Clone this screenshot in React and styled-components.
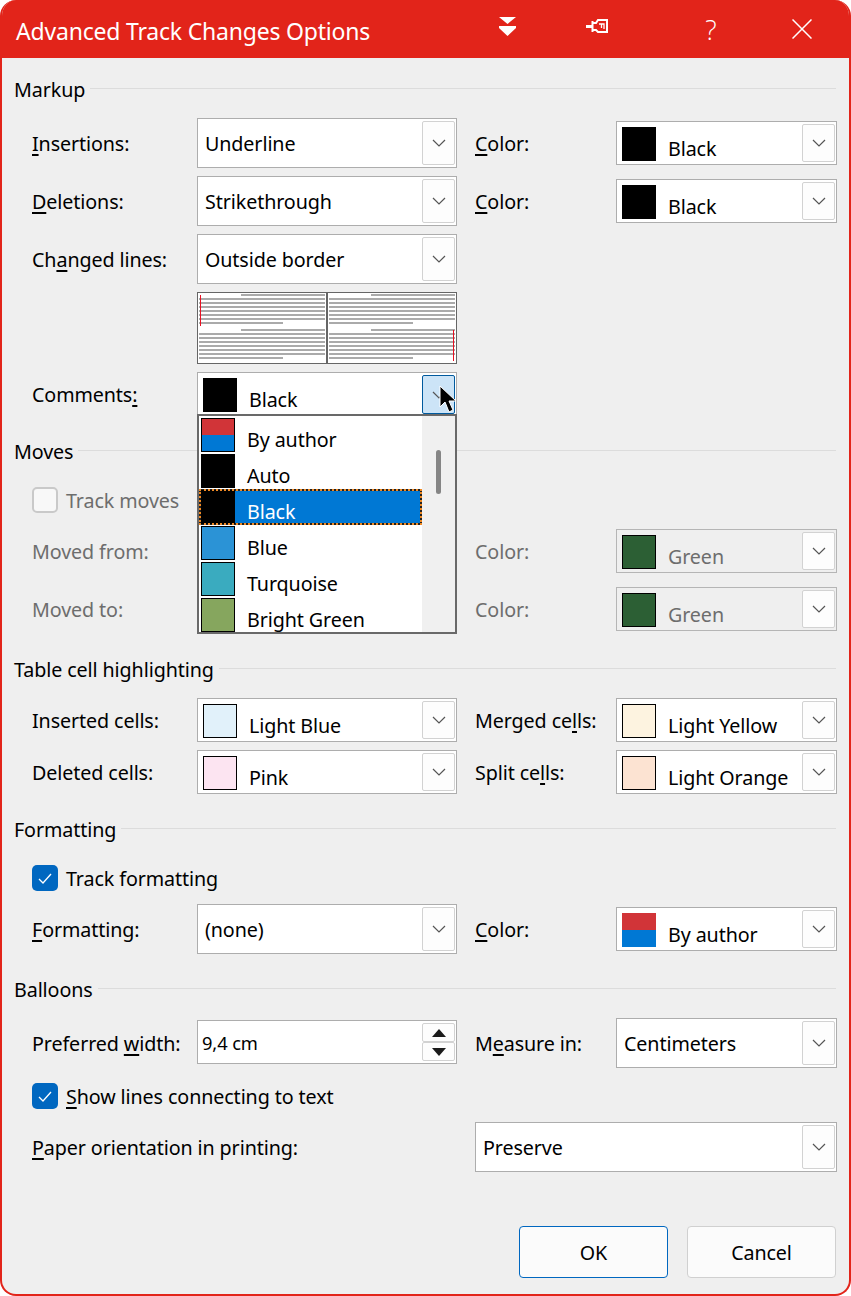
import React from "react";
import styled, { createGlobalStyle } from "styled-components";

const Global = createGlobalStyle`
  html, body { margin: 0; padding: 0; background: #fff; }
  body { width: 851px; height: 1296px; overflow: hidden; font-family: "Noto Sans", "Open Sans", sans-serif; }
  * { box-sizing: border-box; }
`;

const Dialog = styled.div`
  width: 851px; height: 1296px; background: #efefef;
  border: 2px solid #e2241a; border-top: 0; border-radius: 16px;
  overflow: hidden; display: flex; flex-direction: column; position: relative;
  color: #000; font-size: 19.7px; letter-spacing: -0.1px;
`;
const TitleBar = styled.div`
  height: 58px; flex: none; margin: 0 -2px; background: #e2241a; color: #fff;
  display: flex; align-items: center; padding-left: 16px; position: relative;
`;
const Title = styled.div`font-size: 23px; letter-spacing: -0.2px; flex: 1; margin-top: 4px;`;
const TitleIcons = styled.div`
  display: grid; grid-template-columns: 84px 96px 132px 50px; align-items: center;
  justify-items: center; margin-right: 24px; height: 58px;
`;
const IconSlot = styled.div`
  display: flex; align-items: center; justify-content: center; margin-top: ${p => p.$dy || 0}px;
`;
const HelpGlyph = styled.span`font-size: 27px; line-height: 1; font-weight: 300; font-family: "Open Sans", "Noto Sans", sans-serif;`;
const Body = styled.div`flex: 1; padding: 0 13px 0 12px; position: relative;`;
const Group = styled.section`margin-top: ${p => p.$top}px;`;
const GroupHead = styled.div`
  display: flex; align-items: center; height: 30px;
  &::after { content: ""; flex: 1; height: 1px; background: #dcdcdc; margin-left: 5px; margin-top: -2px; }
`;
const Row = styled.div`
  display: grid; grid-template-columns: 165px 260px 18px 141px 221px;
  height: ${p => p.$h || 50}px; margin-top: ${p => p.$top || 0}px; margin-left: 18px;
  align-items: center;
`;
const Label = styled.div`
  white-space: nowrap; grid-column: ${p => p.$col || "auto"};
  color: ${p => (p.$off ? "#6d6d6d" : "#000")};
  u { text-underline-offset: 3px; text-decoration-thickness: 2px; }
`;
const Box = styled.div`
  height: ${p => p.$h}px; background: ${p => (p.$off ? "#efefef" : "#fff")};
  border: 1px solid ${p => (p.$off ? "#b5b5b5" : "#adadad")};
  display: flex; align-items: center; position: relative; grid-column: ${p => p.$col || "auto"};
  padding-left: ${p => p.$pad || 7}px; margin-top: ${p => p.$dy || 0}px;
`;
const BoxText = styled.span`
  flex: 1; white-space: nowrap; padding-top: 1px; color: ${p => (p.$off ? "#6d6d6d" : "#000")};
  font-size: ${p => (p.$small ? "18.3px" : "inherit")};
`;
const ArrowBtn = styled.div`
  position: absolute; right: 1px; top: 1px; bottom: 1px; width: 33px;
  background: ${p => (p.$open ? "#cce4f7" : "#fdfdfd")};
  border: 1px solid ${p => (p.$open ? "#005a9e" : "#d2d2d2")}; border-radius: 2px;
  display: flex; align-items: center; justify-content: center;
  margin: ${p => (p.$open ? "1px 0 0" : "1px 0 1px")};
`;
const Swatch = styled.span`
  width: 34px; height: 34px; flex: none; display: block; margin-top: 2px;
  border: ${p => (p.$plain ? "0" : "1.5px solid #000")};
  background: ${p => p.$c};
`;
const ColorName = styled.span`
  margin-left: 12px; margin-top: 10px; white-space: nowrap; color: ${p => (p.$off ? "#6d6d6d" : "#000")};
`;
const Preview = styled.svg`display: block; grid-column: 2; width: 260px; height: 72px;`;
const CheckRow = styled.div`
  display: flex; align-items: center; height: 26px; margin-left: 18px; margin-top: ${p => p.$top}px;
  color: ${p => (p.$off ? "#6d6d6d" : "#000")};
  u { text-underline-offset: 3px; text-decoration-thickness: 2px; }
`;
const Check = styled.span`
  width: 26px; height: 26px; border-radius: 5px; margin-right: 8px; flex: none;
  background: ${p => (p.$on ? "#0067c0" : "#f8f8f8")};
  border: ${p => (p.$on ? "0" : "2px solid #c9c9c9")};
  display: flex; align-items: center; justify-content: center;
`;
const Spin = styled.div`
  position: absolute; right: 1px; top: 1px; bottom: 1px; width: 33px;
  display: grid; grid-template-rows: 1fr 1fr; gap: 0; padding: 1px 0;
`;
const SpinBtn = styled.div`
  background: #fdfdfd; border: 1px solid #d2d2d2; border-radius: 2px;
  display: flex; align-items: center; justify-content: center;
`;
const Dropdown = styled.div`
  position: absolute; left: 195px; top: 356px; width: 260px; height: 220px; z-index: 2;
  background: #fff; border: 2px solid #696969; display: flex; overflow: hidden;
`;
const List = styled.div`flex: 1; display: flex; flex-direction: column; padding-top: 1px;`;
const Item = styled.div`
  height: 36px; flex: none; display: flex; align-items: center; position: relative; padding-left: 2px;
  color: ${p => (p.$sel ? "#fff" : "#000")};
  background: ${p => (p.$sel ? "linear-gradient(to right, #fff 36px, #0078d4 36px)" : "transparent")};
  ${p => p.$sel && "outline: 2px dotted #f08a24; outline-offset: -2px; box-shadow: inset 0 0 0 2px #222;"}
`;
const ItemSwatch = styled(Swatch)`margin-top: 0;`;
const ItemName = styled.span`margin-left: 12px; margin-top: 8px; white-space: nowrap;`;
const Track = styled.div`width: 33px; flex: none; background: #f0f0f0; position: relative;`;
const Thumb = styled.div`
  position: absolute; left: 14px; top: 34px; width: 5px; height: 44px; border-radius: 3px; background: #858585;
`;
const Cursor = styled.svg`position: absolute; left: 436px; top: 327px; z-index: 3;`;
const Footer = styled.div`
  display: flex; justify-content: flex-end; gap: 19px; margin-top: 54px;
`;
const Btn = styled.div`
  width: 149px; height: 52px; border-radius: 4px; background: #fbfbfb;
  border: 1px solid ${p => (p.$primary ? "#0067c0" : "#d0d0d0")};
  display: flex; align-items: center; justify-content: center;
`;
const PaperRow = styled.div`
  display: grid; grid-template-columns: 443px 362px; margin: 13px 0 0 18px; align-items: center; height: 50px;
`;

const Chevron = ({ c = "#555" }) => (
  <svg width="14" height="8" viewBox="0 0 14 8" fill="none"><path d="M1 1l6 6 6-6" stroke={c} strokeWidth="1.2" /></svg>
);
const Arrow = ({ open }) => <ArrowBtn $open={open}><Chevron /></ArrowBtn>;

const CheckMark = () => (
  <svg width="14" height="11" viewBox="0 0 14 11" fill="none"><path d="M1 6l4 4 8-9" stroke="#fff" strokeWidth="1.3" /></svg>
);

const Select = ({ value, col, h = 50, pad }) => (
  <Box $h={h} $col={col} $pad={pad}><BoxText>{value}</BoxText><Arrow /></Box>
);
const Combo = ({ color, name, col, off, plain, open }) => (
  <Box $h={44} $col={col} $pad={5} $off={off}>
    <Swatch $c={color} $plain={plain} />
    <ColorName $off={off}>{name}</ColorName>
    <Arrow open={open} />
  </Box>
);

const lineSet = (x0, y0) => {
  const out = [];
  for (let i = 0; i < 8; i++) {
    const first = i === 0;
    const last = i === 7;
    out.push(
      <rect
        key={`${x0}-${y0}-${i}`}
        x={x0 + (first ? 42 : 0)}
        y={y0 + i * 4}
        width={first || last ? 84 : 126}
        height="2"
        fill="#aaa"
      />
    );
  }
  return out;
};

const PreviewArt = () => (
  <Preview viewBox="0 0 260 72">
    <rect x="0.5" y="0.5" width="259" height="71" fill="#fff" stroke="#666" />
    <rect x="129" y="0" width="2" height="72" fill="#666" />
    {lineSet(2, 2)}
    {lineSet(132, 2)}
    {lineSet(2, 37)}
    {lineSet(132, 37)}
    <rect x="3" y="3" width="1" height="31" fill="#e81123" />
    <rect x="256" y="38" width="1" height="31" fill="#e81123" />
  </Preview>
);

const SplitSwatch = "linear-gradient(#d13438 50%, #0078d4 50%)";
const items = [
  ["By author", SplitSwatch, false, true],
  ["Auto", "#000", false, true],
  ["Black", "#000", true, true],
  ["Blue", "#2b93d6"],
  ["Turquoise", "#3aabbf"],
  ["Bright Green", "#86a65e"],
];

export default function App() {
  return (
    <>
      <Global />
      <Dialog>
        <TitleBar>
          <Title>Advanced Track Changes Options</Title>
          <TitleIcons>
            <IconSlot $dy={-5}>
              <svg width="17" height="19" viewBox="0 0 17 19" fill="#fff"><path d="M0 0h17L8.5 7zM0 9h17v2L8.5 19 0 11z" /></svg>
            </IconSlot>
            <IconSlot $dy={-6}>
              <svg width="22" height="15" viewBox="0 0 22 15" fill="none" stroke="#fff">
                <path d="M0 7.5h6" strokeWidth="3" />
                <path d="M6.5 2v11" strokeWidth="2" />
                <path d="M7 4h3l2-3h9v12h-9l-2-2H7" strokeWidth="2" />
                <path d="M13 5h5v5M15.5 5v4" strokeWidth="1.3" />
              </svg>
            </IconSlot>
            <IconSlot $dy={0}><HelpGlyph>?</HelpGlyph></IconSlot>
            <IconSlot $dy={0}>
              <svg width="20" height="20" viewBox="0 0 20 20" stroke="#fff" strokeWidth="1.5" fill="none"><path d="M0.5 0.5l19 19M19.5 0.5l-19 19" /></svg>
            </IconSlot>
          </TitleIcons>
        </TitleBar>
        <Body>
          <Cursor width="20" height="30" viewBox="0 0 20 30">
            <path d="M2 1v21l5-5 4 10 4-2-4-9h7z" fill="#000" stroke="#fff" strokeWidth="1" />
          </Cursor>
          <Dropdown>
            <List>
              {items.map(([n, c, sel, plain]) => (
                <Item key={n} $sel={sel}>
                  <ItemSwatch $c={c} $plain={sel} />
                  <ItemName>{n}</ItemName>
                </Item>
              ))}
            </List>
            <Track><Thumb /></Track>
          </Dropdown>

          <Group $top={16}>
            <GroupHead>Markup</GroupHead>
            <Row $top={14}>
              <Label><u>I</u>nsertions:</Label><Select value="Underline" />
              <Label $col={4}><u>C</u>olor:</Label><Combo color="#000" name="Black" plain />
            </Row>
            <Row $top={8}>
              <Label><u>D</u>eletions:</Label><Select value="Strikethrough" />
              <Label $col={4}><u>C</u>olor:</Label><Combo color="#000" name="Black" plain />
            </Row>
            <Row $top={8}>
              <Label>Ch<u>a</u>nged lines:</Label><Select value="Outside border" />
            </Row>
            <Row $h={72} $top={8}><PreviewArt /></Row>
            <Row $h={44} $top={8}>
              <Label>Comments<u>:</u></Label><Combo color="#000" name="Black" plain open />
            </Row>
          </Group>

          <Group $top={20}>
            <GroupHead>Moves</GroupHead>
            <CheckRow $off $top={21}><Check />Track moves</CheckRow>
            <Row $h={44} $top={16}>
              <Label $off>Moved from:</Label><Box $off $h={44} />
              <Label $off $col={4}>Color:</Label><Combo off color="#2c5f34" name="Green" />
            </Row>
            <Row $h={44} $top={14}>
              <Label $off>Moved to:</Label><Box $off $h={44} />
              <Label $off $col={4}>Color:</Label><Combo off color="#2c5f34" name="Green" />
            </Row>
          </Group>

          <Group $top={23}>
            <GroupHead>Table cell highlighting</GroupHead>
            <Row $h={44} $top={14}>
              <Label>Inserted cells:</Label><Combo color="#e1f1fa" name="Light Blue" />
              <Label $col={4}>Merged ce<u>l</u>ls:</Label><Combo color="#fdf3e0" name="Light Yellow" />
            </Row>
            <Row $h={44} $top={8}>
              <Label>Deleted cells:</Label><Combo color="#fce4f1" name="Pink" />
              <Label $col={4}>Split ce<u>l</u>ls:</Label><Combo color="#fce3d2" name="Light Orange" />
            </Row>
          </Group>

          <Group $top={20}>
            <GroupHead>Formatting</GroupHead>
            <CheckRow $top={21}><Check $on><CheckMark /></Check>Track formatting</CheckRow>
            <Row $top={13}>
              <Label><u>F</u>ormatting:</Label><Select value="(none)" />
              <Label $col={4}><u>C</u>olor:</Label><Combo color={SplitSwatch} name="By author" plain />
            </Row>
          </Group>

          <Group $top={20}>
            <GroupHead>Balloons</GroupHead>
            <Row $top={14}>
              <Label>Preferred <u>w</u>idth:</Label>
              <Box $h={44} $pad={4} $dy={-2}>
                <BoxText $small>9,4 cm</BoxText>
                <Spin>
                  <SpinBtn><svg width="14" height="8" viewBox="0 0 14 8"><path d="M7 0l7 8H0z" fill="#1a1a1a" /></svg></SpinBtn>
                  <SpinBtn><svg width="14" height="8" viewBox="0 0 14 8"><path d="M0 0h14L7 8z" fill="#1a1a1a" /></svg></SpinBtn>
                </Spin>
              </Box>
              <Label $col={4}>M<u>e</u>asure in:</Label><Select value="Centimeters" />
            </Row>
            <CheckRow $top={15}><Check $on><CheckMark /></Check><span><u>S</u>how lines connecting to text</span></CheckRow>
            <PaperRow>
              <Label><u>P</u>aper orientation in printing:</Label>
              <Select value="Preserve" />
            </PaperRow>
          </Group>

          <Footer>
            <Btn $primary>OK</Btn>
            <Btn>Cancel</Btn>
          </Footer>
        </Body>
      </Dialog>
    </>
  );
}
